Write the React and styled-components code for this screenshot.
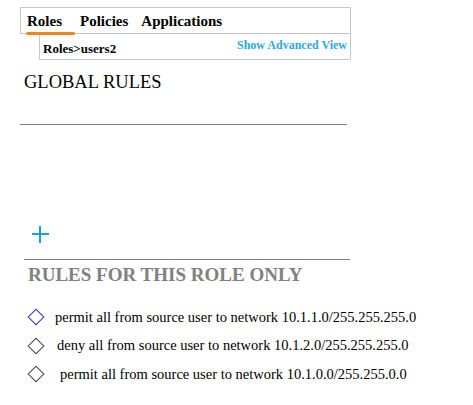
import React from 'react';
import styled, { createGlobalStyle } from 'styled-components';

const GlobalStyle = createGlobalStyle`
  body {
    margin: 0;
    background: #ffffff;
    font-family: "Liberation Serif", "Times New Roman", serif;
  }
`;

const Page = styled.div`
  width: 473px;
  height: 405px;
  padding: 7px 0 0 20px;
  box-sizing: border-box;
`;

const TabBar = styled.div`
  width: 331px;
  height: 27px;
  box-sizing: border-box;
  border: 1px solid #c8c8c8;
  display: flex;
  align-items: flex-start;
  padding-left: 6px;
  gap: 13px;
`;

const Tab = styled.div`
  position: relative;
  font-size: 15px;
  font-weight: bold;
  color: #000;
  padding-top: 4px;
  padding-right: ${props => (props.active ? '5px' : '0')};
  line-height: 18px;

  &::after {
    content: '';
    display: ${props => (props.active ? 'block' : 'none')};
    position: absolute;
    left: -1px;
    right: -8px;
    top: 24px;
    height: 3px;
    border-radius: 2px;
    background: #f58220;
  }
`;

const SubBar = styled.div`
  margin-left: 19px;
  width: 312px;
  height: 26px;
  box-sizing: border-box;
  border: 1px solid #c8c8c8;
  border-top: none;
  display: flex;
  justify-content: space-between;
  align-items: flex-end;
  padding: 0 3px 2px 3px;
  font-weight: bold;
`;

const Crumb = styled.span`
  color: #000;
  font-size: 13px;
`;

const AdvancedLink = styled.span`
  color: #29a8e0;
  font-size: 12px;
  align-self: flex-start;
  margin-top: 4px;
`;

const SectionTitle = styled.div`
  margin: ${props => (props.muted ? '5px 0 0 8px' : '12px 0 0 4px')};
  font-size: ${props => (props.muted ? '19px' : '18.5px')};
  line-height: 20px;
  color: ${props => (props.muted ? '#808080' : '#000')};
  font-weight: ${props => (props.muted ? 'bold' : 'normal')};
`;

const Rule = styled.div`
  height: 1px;
  background: #808080;
  width: ${props => props.width}px;
  margin-left: ${props => props.offset}px;
  margin-top: ${props => props.top}px;
`;

const AddButton = styled.div`
  margin: 101px 0 0 12px;
  width: 17px;
  height: 17px;
  position: relative;

  &::before,
  &::after {
    content: '';
    position: absolute;
    background: #1ba1e2;
  }
  &::before {
    left: 0;
    right: 0;
    top: 7px;
    height: 2px;
  }
  &::after {
    top: 0;
    bottom: 0;
    left: 7px;
    width: 2px;
  }
`;

const RuleList = styled.div`
  margin-top: 24px;
  display: flex;
  flex-direction: column;
  gap: 12.5px;
`;

const RuleRow = styled.div`
  display: flex;
  align-items: center;
  height: 16px;
  font-size: 14.5px;
  color: #000;
  padding-left: 7px;
`;

const Diamond = styled.span`
  width: 12px;
  height: 12px;
  box-sizing: border-box;
  border: 1px solid ${props => (props.selected ? '#2a2ad8' : '#444')};
  transform: rotate(45deg);
  margin: 0 ${props => 13 + props.indent}px 0 3px;
  flex: none;
`;

const rules = [
  { text: 'permit all from source user to network 10.1.1.0/255.255.255.0', indent: 0, selected: true },
  { text: 'deny all from source user to network 10.1.2.0/255.255.255.0', indent: 2 },
  { text: 'permit all from source user to network 10.1.0.0/255.255.0.0', indent: 5 },
];

const App = () => (
  <>
    <GlobalStyle />
    <Page>
      <TabBar>
        <Tab active>Roles</Tab>
        <Tab>Policies</Tab>
        <Tab>Applications</Tab>
      </TabBar>
      <SubBar>
        <Crumb>Roles&gt;users2</Crumb>
        <AdvancedLink>Show Advanced View</AdvancedLink>
      </SubBar>

      <SectionTitle>GLOBAL RULES</SectionTitle>
      <Rule width={327} offset={0} top={32} />

      <AddButton />
      <Rule width={326} offset={4} top={16} />
      <SectionTitle muted>RULES FOR THIS ROLE ONLY</SectionTitle>

      <RuleList>
        {rules.map(rule => (
          <RuleRow key={rule.text}>
            <Diamond selected={rule.selected} indent={rule.indent} />
            {rule.text}
          </RuleRow>
        ))}
      </RuleList>
    </Page>
  </>
);

export default App;
